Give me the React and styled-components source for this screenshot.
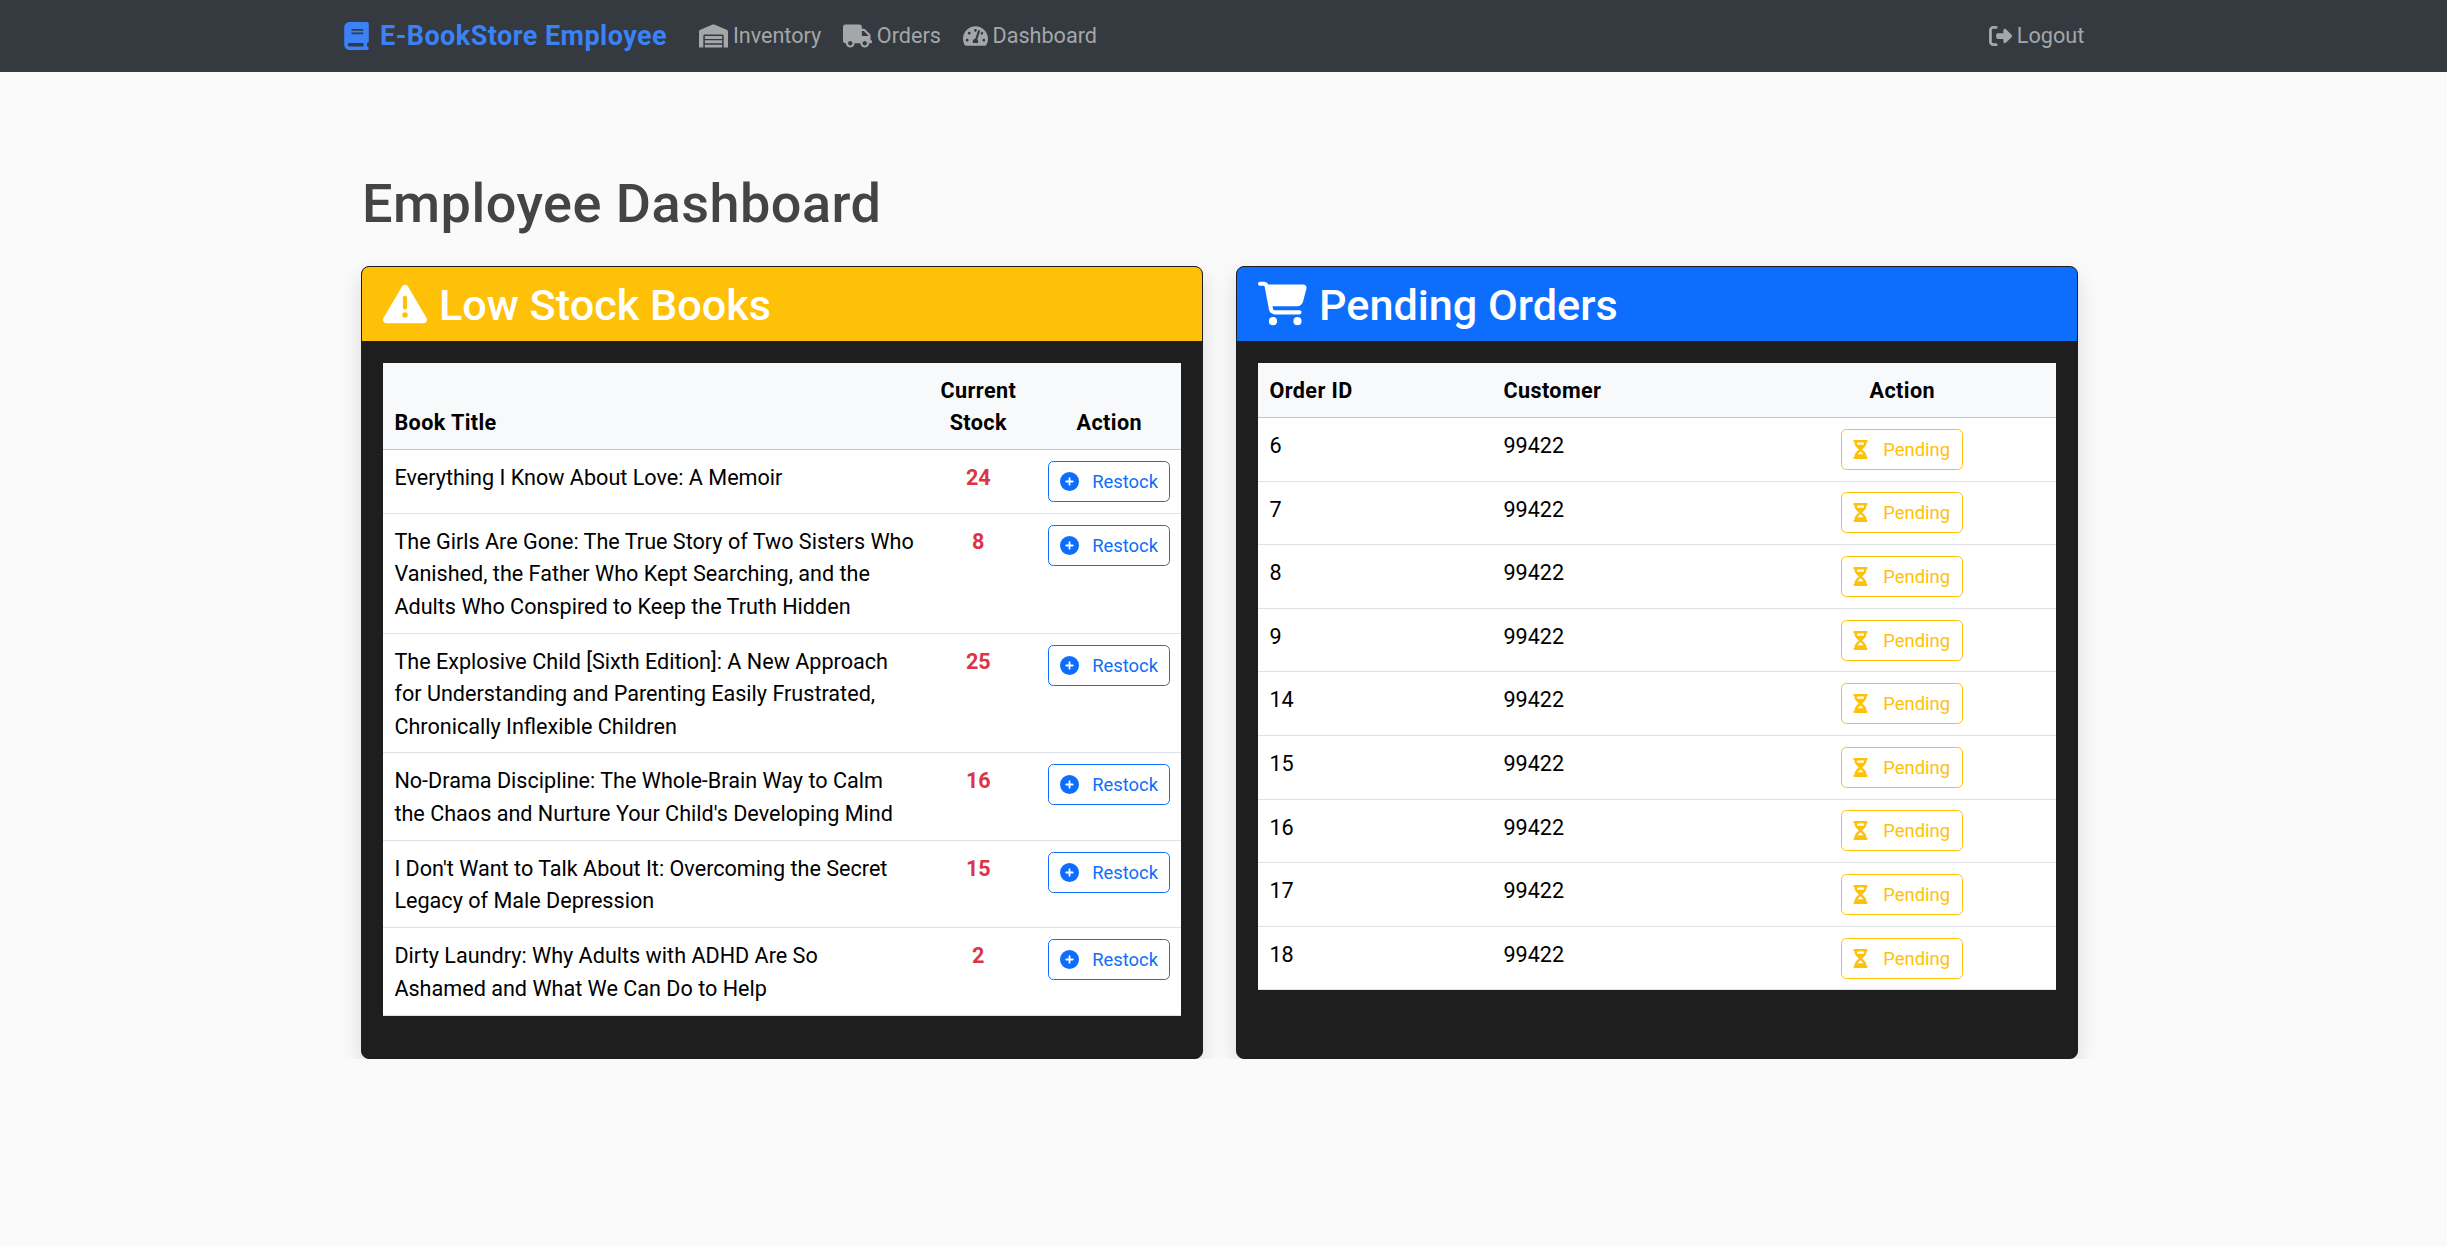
import React from 'react';
import styled, { createGlobalStyle } from 'styled-components';
import { FaTachometerAlt, FaWarehouse, FaTruck } from 'react-icons/fa';
import {
    FaBook, FaRightFromBracket,
    FaTriangleExclamation, FaCartShopping, FaCirclePlus, FaHourglassHalf,
} from 'react-icons/fa6';

const GlobalStyle = createGlobalStyle`
    * { box-sizing: border-box; }
    body {
        margin: 0;
        background-color: #fafafa;
        color: #000;
        font-family: Roboto, "Noto Sans", sans-serif;
        font-size: 21.6px;
        line-height: 1.5;
    }
`;

const Navbar = styled.nav`
    height: 72px;
    background-color: #343a40;
    display: flex;
    align-items: center;
    padding: 0 352px 0 344px;
`;
const Brand = styled.a`
    display: flex;
    align-items: center;
    gap: 11px;
    margin-right: 21px;
    font-size: 27px;
    font-weight: 700;
    letter-spacing: 0.45px;
    color: #3b82f6;
    white-space: nowrap;
    svg {
        width: 25px;
        height: 28px;
    }
`;
const NavLink = styled.a`
    display: flex;
    align-items: center;
    gap: 5px;
    padding: 0 10.8px;
    color: #a4a7a9;
    white-space: nowrap;
    svg {
        flex-shrink: 0;
        width: ${({iconWidth}) => iconWidth || 24}px;
        height: 24px;
    }
`;
const NavRight = styled.div`
    margin-left: auto;
`;

const Main = styled.main`
    padding: 100px 0 0 361px;
`;
const Title = styled.h1`
    margin: 0 0 29.2px;
    padding-left: 1px;
    font-size: 54px;
    line-height: 64.8px;
    font-weight: 500;
    letter-spacing: 0.5px;
    color: #444;
`;
const Columns = styled.div`
    display: grid;
    grid-template-columns: 842px 842px;
    gap: 33px;
`;
const Panel = styled.section`
    background-color: #1e1e1e;
    border: 1px solid #1e1e1e;
    border-radius: 8px;
    box-shadow: 0 10px 22px rgba(0, 0, 0, 0.13);
    overflow: hidden;
`;
const PanelHeader = styled.header`
    display: flex;
    align-items: center;
    gap: 12px;
    height: 74px;
    padding: 0 21px;
    background-color: ${({color}) => color};
    color: #fff;
`;
const PanelTitle = styled.h2`
    margin: 0;
    padding-top: 3px;
    font-size: 43.2px;
    line-height: 1.2;
    font-weight: 500;
`;
const PanelBody = styled.div`
    padding: 22px 21px 42.5px;
`;
const Table = styled.table`
    width: 100%;
    table-layout: fixed;
    border-collapse: collapse;
    background-color: #fff;
`;
const Th = styled.th`
    padding: 11.8px 10.8px 9.8px 11.4px;
    background-color: #f8f9fa;
    border-bottom: 1px solid #c4c6c8;
    text-align: ${({center}) => center ? 'center' : 'left'};
    vertical-align: bottom;
    font-weight: 700;
    letter-spacing: 0.4px;
`;
const Td = styled.td`
    padding: 12px 10.8px 9.6px 11.4px;
    border-bottom: 1px solid #dee2e6;
    text-align: ${({center}) => center ? 'center' : 'left'};
    vertical-align: top;
`;
const BookTitle = styled.td`
    padding: 12px 0 9.6px 11.4px;
    border-bottom: 1px solid #dee2e6;
    vertical-align: top;
    white-space: pre-line;
`;
const ButtonCell = styled.td`
    padding: 10.8px;
    border-bottom: 1px solid #dee2e6;
    text-align: center;
    vertical-align: top;
`;
const Stock = styled.strong`
    color: #dc3545;
    font-weight: 700;
`;
const SmallButton = styled.button`
    display: inline-flex;
    align-items: center;
    justify-content: space-between;
    width: 122px;
    height: 41px;
    padding: 0 ${({padRight}) => padRight}px 0 11px;
    border: 1px solid ${({color}) => color};
    border-radius: 5.4px;
    background-color: #fff;
    color: ${({color}) => color};
    font-family: inherit;
    font-size: 18.4px;
    white-space: nowrap;
    svg {
        flex-shrink: 0;
        width: ${({iconWidth}) => iconWidth}px;
        height: 19px;
    }
`;

const BLUE = '#0d6efd';
const YELLOW = '#ffc107';

const books = [
    ['Everything I Know About Love: A Memoir', 24],
    ['The Girls Are Gone: The True Story of Two Sisters Who\nVanished, the Father Who Kept Searching, and the\nAdults Who Conspired to Keep the Truth Hidden', 8],
    ['The Explosive Child [Sixth Edition]: A New Approach\nfor Understanding and Parenting Easily Frustrated,\nChronically Inflexible Children', 25],
    ["No-Drama Discipline: The Whole-Brain Way to Calm\nthe Chaos and Nurture Your Child's Developing Mind", 16],
    ["I Don't Want to Talk About It: Overcoming the Secret\nLegacy of Male Depression", 15],
    ['Dirty Laundry: Why Adults with ADHD Are So\nAshamed and What We Can Do to Help', 2],
];
const orders = [6, 7, 8, 9, 14, 15, 16, 17, 18];

export default function App() {
    return (
        <>
            <GlobalStyle/>
            <Navbar>
                <Brand><FaBook/>E-BookStore Employee</Brand>
                <NavLink iconWidth={29}><FaWarehouse/>Inventory</NavLink>
                <NavLink iconWidth={29}><FaTruck/>Orders</NavLink>
                <NavLink iconWidth={25}><FaTachometerAlt/>Dashboard</NavLink>
                <NavRight>
                    <NavLink iconWidth={23}><FaRightFromBracket/>Logout</NavLink>
                </NavRight>
            </Navbar>
            <Main>
                <Title>Employee Dashboard</Title>
                <Columns>
                    <Panel>
                        <PanelHeader color={YELLOW}>
                            <FaTriangleExclamation size={44}/>
                            <PanelTitle>Low Stock Books</PanelTitle>
                        </PanelHeader>
                        <PanelBody>
                            <Table>
                                <colgroup>
                                    <col width="536"/>
                                    <col width="118"/>
                                    <col width="144"/>
                                </colgroup>
                                <thead>
                                    <tr>
                                        <Th>Book Title</Th>
                                        <Th center>Current Stock</Th>
                                        <Th center>Action</Th>
                                    </tr>
                                </thead>
                                <tbody>
                                    {books.map(([title, stock]) => (
                                        <tr key={title}>
                                            <BookTitle>{title}</BookTitle>
                                            <Td center><Stock>{stock}</Stock></Td>
                                            <ButtonCell>
                                                <SmallButton color={BLUE} iconWidth={19} padRight={11}><FaCirclePlus/>Restock</SmallButton>
                                            </ButtonCell>
                                        </tr>
                                    ))}
                                </tbody>
                            </Table>
                        </PanelBody>
                    </Panel>
                    <Panel>
                        <PanelHeader color={BLUE}>
                            <FaCartShopping size={49}/>
                            <PanelTitle>Pending Orders</PanelTitle>
                        </PanelHeader>
                        <PanelBody>
                            <Table>
                                <colgroup>
                                    <col width="234"/>
                                    <col width="256"/>
                                    <col width="308"/>
                                </colgroup>
                                <thead>
                                    <tr>
                                        <Th>Order ID</Th>
                                        <Th>Customer</Th>
                                        <Th center>Action</Th>
                                    </tr>
                                </thead>
                                <tbody>
                                    {orders.map(id => (
                                        <tr key={id}>
                                            <Td>{id}</Td>
                                            <Td>99422</Td>
                                            <ButtonCell>
                                                <SmallButton color={YELLOW} iconWidth={15} padRight={12}><FaHourglassHalf/>Pending</SmallButton>
                                            </ButtonCell>
                                        </tr>
                                    ))}
                                </tbody>
                            </Table>
                        </PanelBody>
                    </Panel>
                </Columns>
            </Main>
        </>
    );
}
